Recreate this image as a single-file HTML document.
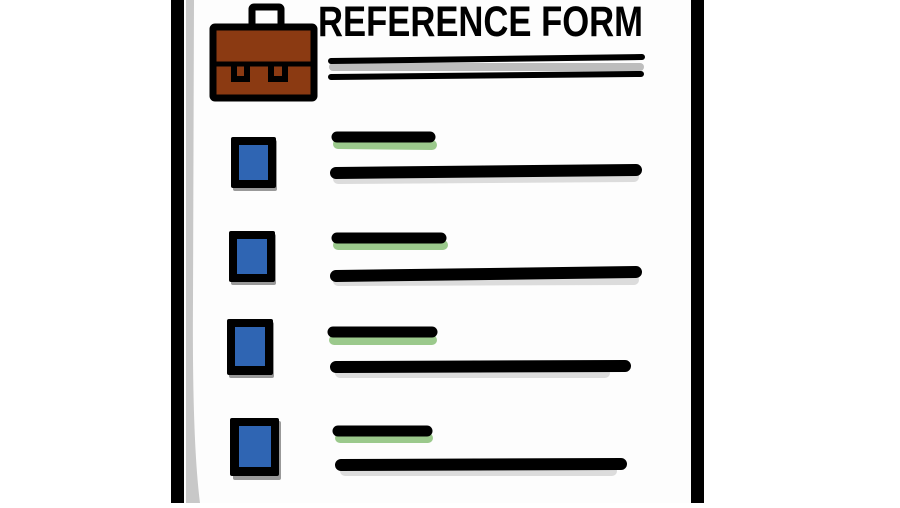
<!DOCTYPE html><html><head><style>body{margin:0;background:#fff;width:900px;height:503px;overflow:hidden}</style></head><body>
<svg width="900" height="503" viewBox="0 0 900 503">
<rect x="178" y="0" width="520" height="503" fill="#fdfdfd"/>
<path d="M186 0 L186 503 L200 503 Q192 440 193 300 L194 0Z" fill="#c8c8c8"/>
<rect x="171" y="0" width="13" height="503" fill="#000"/>
<rect x="691" y="0" width="13" height="503" fill="#000"/>
<!-- briefcase -->
<rect x="252" y="7" width="29" height="24" rx="2" fill="none" stroke="#000" stroke-width="7"/>
<rect x="213" y="27" width="101" height="71" rx="2" fill="#8b3a12" stroke="#000" stroke-width="7"/>
<line x1="215" y1="64" x2="312" y2="64" stroke="#000" stroke-width="5"/>
<path d="M234 64 L234 79 L247 79 L247 64" fill="none" stroke="#000" stroke-width="6"/>
<path d="M271 64 L271 79 L285 79 L285 64" fill="none" stroke="#000" stroke-width="6"/>
<text x="318" y="36" font-family="Liberation Sans, sans-serif" font-weight="bold" font-size="43" textLength="325" lengthAdjust="spacingAndGlyphs" fill="#000">REFERENCE FORM</text>
<g stroke-linecap="round">
<line x1="333" y1="67" x2="640" y2="67" stroke="#bdbdbd" stroke-width="8"/>
<line x1="331" y1="61" x2="642" y2="57" stroke="#000" stroke-width="6"/>
<line x1="331" y1="77" x2="641" y2="74" stroke="#000" stroke-width="6"/>
</g>
<g stroke-linecap="round">
<line x1="338" y1="144" x2="432" y2="145" stroke="#9bc98c" stroke-width="10"/>
<line x1="337" y1="137" x2="430" y2="137" stroke="#000" stroke-width="11"/>
<line x1="338" y1="179" x2="634" y2="177" stroke="#dcdcdc" stroke-width="10"/>
<line x1="336" y1="173" x2="636" y2="170" stroke="#000" stroke-width="12"/>
<line x1="338" y1="245" x2="443" y2="245" stroke="#9bc98c" stroke-width="10"/>
<line x1="337" y1="238" x2="441" y2="238" stroke="#000" stroke-width="11"/>
<line x1="338" y1="281" x2="634" y2="280" stroke="#dcdcdc" stroke-width="10"/>
<line x1="336" y1="276" x2="636" y2="272" stroke="#000" stroke-width="12"/>
<line x1="334" y1="340" x2="432" y2="340" stroke="#9bc98c" stroke-width="10"/>
<line x1="333" y1="332" x2="432" y2="332" stroke="#000" stroke-width="11"/>
<line x1="340" y1="373" x2="605" y2="373" stroke="#dcdcdc" stroke-width="10"/>
<line x1="336" y1="367" x2="625" y2="366" stroke="#000" stroke-width="12"/>
<line x1="340" y1="438" x2="428" y2="438" stroke="#9bc98c" stroke-width="10"/>
<line x1="338" y1="431" x2="427" y2="431" stroke="#000" stroke-width="11"/>
<line x1="345" y1="471" x2="612" y2="471" stroke="#dcdcdc" stroke-width="10"/>
<line x1="341" y1="465" x2="621" y2="464" stroke="#000" stroke-width="12"/>
</g>
<g>
<rect x="233" y="140" width="44" height="51" fill="#999" rx="2"/>
<rect x="231" y="137" width="45" height="51" fill="#000" rx="2"/>
<rect x="239" y="145" width="29" height="35" fill="#2f65b3"/>
<rect x="231" y="234" width="45" height="51" fill="#999" rx="2"/>
<rect x="229" y="231" width="46" height="51" fill="#000" rx="2"/>
<rect x="237" y="239" width="30" height="35" fill="#2f65b3"/>
<rect x="229" y="322" width="45" height="56" fill="#999" rx="2"/>
<rect x="227" y="319" width="46" height="56" fill="#000" rx="2"/>
<rect x="235" y="327" width="30" height="39" fill="#2f65b3"/>
<rect x="233" y="421" width="48" height="59" fill="#999" rx="2"/>
<rect x="230" y="418" width="49" height="58" fill="#000" rx="2"/>
<rect x="239" y="426" width="32" height="41" fill="#2f65b3"/>
</g>
</svg>
</body></html>
